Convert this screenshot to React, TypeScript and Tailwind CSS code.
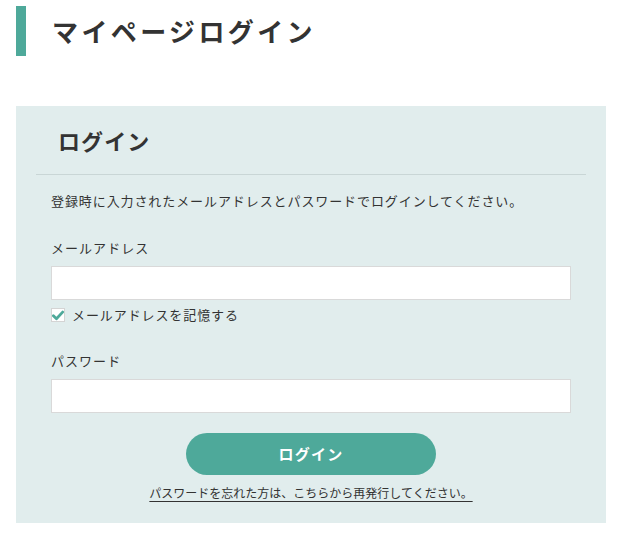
export default function App() {
  return (
    <div className="w-[622px] min-h-[542px] bg-white text-[#333] font-['Noto_Sans_CJK_JP',sans-serif]">
      <h1 className="ml-4 mt-[6px] flex h-[50px] items-center border-l-[10px] border-[#4ea99a] pl-[26px] text-[26px] font-bold leading-none tracking-[0.13em] text-[#333]">
        マイページログイン
      </h1>

      <section className="mx-4 mt-[50px] bg-[#e1eded] pb-[21px]">
        <div className="mx-5 flex h-[69px] items-center border-b border-[#c9d6d6] pl-[22px]">
          <h2 className="text-[22px] font-bold leading-none tracking-[0.05em]">ログイン</h2>
        </div>

        <div className="px-[35px]">
          <p className="mt-4 text-[13px] leading-5 tracking-[0.07em]">
            登録時に入力されたメールアドレスとパスワードでログインしてください。
          </p>

          <label className="mt-[27px] block text-[13px] leading-5 tracking-[0.08em]">メールアドレス</label>
          <input
            type="email"
            className="mt-2 block h-[34px] w-full border border-[#d9d9d9] bg-white px-2 text-sm outline-none"
          />
          <div className="mt-[5px] flex h-5 items-center gap-[7px]">
            <span className="flex h-[14px] w-[14px] items-center justify-center border border-[#d4d4d4] bg-white">
              <svg width="13" height="11" viewBox="0 0 13 11" fill="none">
                <path d="M1.5 5.8 4.8 9 11.5 1.8" stroke="#4ea99a" strokeWidth="3" strokeLinecap="round" strokeLinejoin="round" />
              </svg>
            </span>
            <span className="text-[13px] leading-5 tracking-[0.07em]">メールアドレスを記憶する</span>
          </div>

          <label className="mt-[26px] block text-[13px] leading-5 tracking-[0.08em]">パスワード</label>
          <input
            type="password"
            className="mt-2 block h-[34px] w-full border border-[#d9d9d9] bg-white px-2 text-sm outline-none"
          />

          <div className="mt-5 flex flex-col items-center">
            <button className="h-[42px] w-[250px] rounded-full bg-[#4ea99a] text-[15px] font-bold tracking-[0.08em] text-white">
              ログイン
            </button>
            <a href="#" className="mt-[9px] text-[12px] leading-[18px] text-[#333] underline underline-offset-[3px]">
              パスワードを忘れた方は、こちらから再発行してください。
            </a>
          </div>
        </div>
      </section>
    </div>
  );
}
